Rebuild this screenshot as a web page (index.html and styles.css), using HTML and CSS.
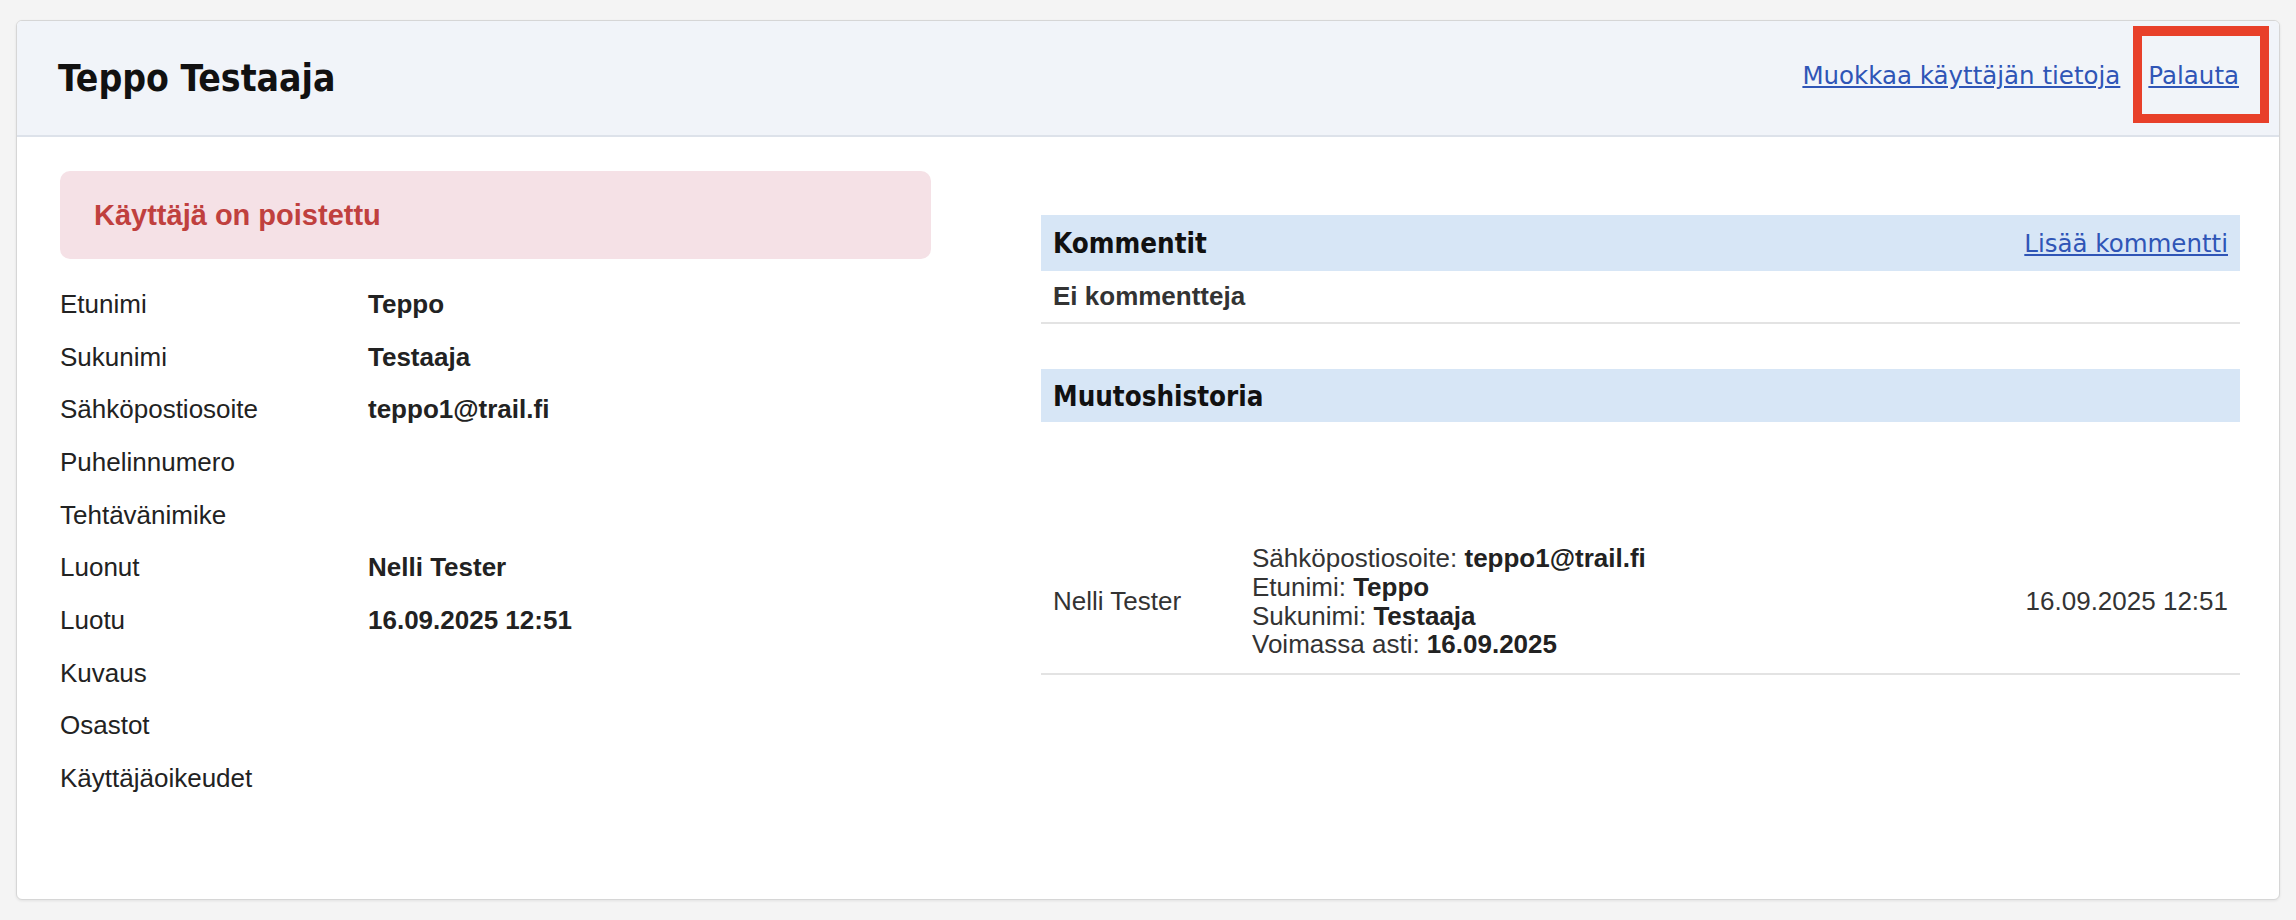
FILE: index.html
```html
<!DOCTYPE html>
<html lang="fi">
<head>
    <meta charset="UTF-8">
    <meta name="viewport" content="width=device-width, initial-scale=1.0">
    <title>Teppo Testaaja</title>
    <link rel="stylesheet" href="styles.css">
</head>
<body>
    <div class="card">
        <div class="card-header">
            <h1 class="user-name">Teppo Testaaja</h1>
            <div class="header-actions">
                <a href="#">Muokkaa käyttäjän tietoja</a>
                <a href="#">Palauta</a>
            </div>
        </div>

        <div class="card-body">
            <div class="info-col">
                <div class="alert">Käyttäjä on poistettu</div>
                <div class="info-list">
                    <div class="info-row"><span>Etunimi</span><b>Teppo</b></div>
                    <div class="info-row"><span>Sukunimi</span><b>Testaaja</b></div>
                    <div class="info-row"><span>Sähköpostiosoite</span><b>teppo1@trail.fi</b></div>
                    <div class="info-row"><span>Puhelinnumero</span><b></b></div>
                    <div class="info-row"><span>Tehtävänimike</span><b></b></div>
                    <div class="info-row"><span>Luonut</span><b>Nelli Tester</b></div>
                    <div class="info-row"><span>Luotu</span><b>16.09.2025 12:51</b></div>
                    <div class="info-row"><span>Kuvaus</span><b></b></div>
                    <div class="info-row"><span>Osastot</span><b></b></div>
                    <div class="info-row"><span>Käyttäjäoikeudet</span><b></b></div>
                </div>
            </div>

            <div class="side-col">
                <div class="section-bar">
                    <span>Kommentit</span>
                    <a href="#">Lisää kommentti</a>
                </div>
                <div class="empty-row">Ei kommentteja</div>

                <div class="section-bar history-bar">
                    <span>Muutoshistoria</span>
                </div>
                <table class="history">
                    <thead>
                        <tr><th class="col-user"></th><th></th><th></th></tr>
                    </thead>
                    <tbody>
                        <tr>
                            <td class="col-user">Nelli Tester</td>
                            <td class="changes">
                                Sähköpostiosoite: <b>teppo1@trail.fi</b><br>
                                Etunimi: <b>Teppo</b><br>
                                Sukunimi: <b>Testaaja</b><br>
                                Voimassa asti: <b>16.09.2025</b>
                            </td>
                            <td class="col-date">16.09.2025 12:51</td>
                        </tr>
                    </tbody>
                </table>
            </div>
        </div>
    </div>

    <!-- korostus "Palauta"-linkin ympärillä -->
    <div class="highlight"></div>
</body>
</html>
```

FILE: styles.css
```css
body {
    font-family: "Liberation Sans", Arial, sans-serif;
    font-size: 26px;
    color: #222;
    margin: 0;
    padding: 20px 16px;
    height: 100vh;
    box-sizing: border-box;
    background-color: #f4f4f4;
}

.card {
    height: 100%;
    box-sizing: border-box;
    background-color: white;
    border: 1px solid #d6d6d6;
    border-radius: 6px;
    box-shadow: 0 1px 3px rgba(0,0,0,0.08);
    overflow: hidden;
}

.card-header {
    display: flex;
    align-items: center;
    justify-content: space-between;
    height: 114px;
    padding: 0 40px 0 41px;
    background-color: #f1f4f9;
    border-bottom: 2px solid #dde2ea;
}

.user-name {
    margin: 0;
    font-family: "DejaVu Sans Condensed", "DejaVu Sans", sans-serif;
    font-stretch: condensed;
    font-size: 37px;
    font-weight: bold;
    color: #111;
}

.header-actions {
    display: flex;
    gap: 28px;
    margin-bottom: 6px;
}

a {
    font-family: "DejaVu Sans", Verdana, sans-serif;
    font-stretch: normal;
    font-size: 24.5px;
    font-weight: normal;
    color: #2f55b6;
    text-decoration: underline;
}

.card-body {
    display: grid;
    grid-template-columns: 871px 1fr;
    gap: 110px;
    padding: 0 39px 0 43px;
}

.info-col {
    padding-top: 34px;
}

.alert {
    height: 88px;
    box-sizing: border-box;
    display: flex;
    align-items: center;
    padding-left: 34px;
    background-color: #f5e1e6;
    border-radius: 10px;
    color: #c0403e;
    font-size: 29px;
    font-weight: bold;
}

.info-list {
    margin-top: 19px;
}

.info-row {
    display: grid;
    grid-template-columns: 308px 1fr;
    align-items: center;
    height: 52.7px;
}

.side-col {
    padding-top: 78px;
}

.section-bar {
    display: flex;
    align-items: center;
    justify-content: space-between;
    height: 56px;
    padding: 0 12px;
    background-color: #d7e6f6;
    font-family: "DejaVu Sans Condensed", "DejaVu Sans", sans-serif;
    font-stretch: condensed;
    font-size: 27.5px;
    font-weight: bold;
    color: #111;
}

.history-bar {
    height: 53px;
}

.empty-row {
    height: 51px;
    display: flex;
    align-items: center;
    padding: 0 12px;
    border-bottom: 2px solid #e3e3e3;
    font-weight: bold;
    color: #333;
    margin-bottom: 45px;
}

.history {
    width: 100%;
    border-collapse: collapse;
    table-layout: fixed;
    color: #333;
}

.history th {
    height: 108px;
    padding: 0;
}

.history td {
    padding: 14px 12px;
    line-height: 28.8px;
    vertical-align: middle;
    border-bottom: 2px solid #e3e3e3;
}

.history .col-user {
    width: 199px;
    box-sizing: border-box;
}

.history .col-date {
    width: 240px;
    text-align: right;
}

.changes b {
    color: #222;
}

.highlight {
    position: absolute;
    left: 2133px;
    top: 26px;
    width: 136px;
    height: 97px;
    box-sizing: border-box;
    border: 9px solid #e8402a;
    border-top-width: 10px;
}
```
